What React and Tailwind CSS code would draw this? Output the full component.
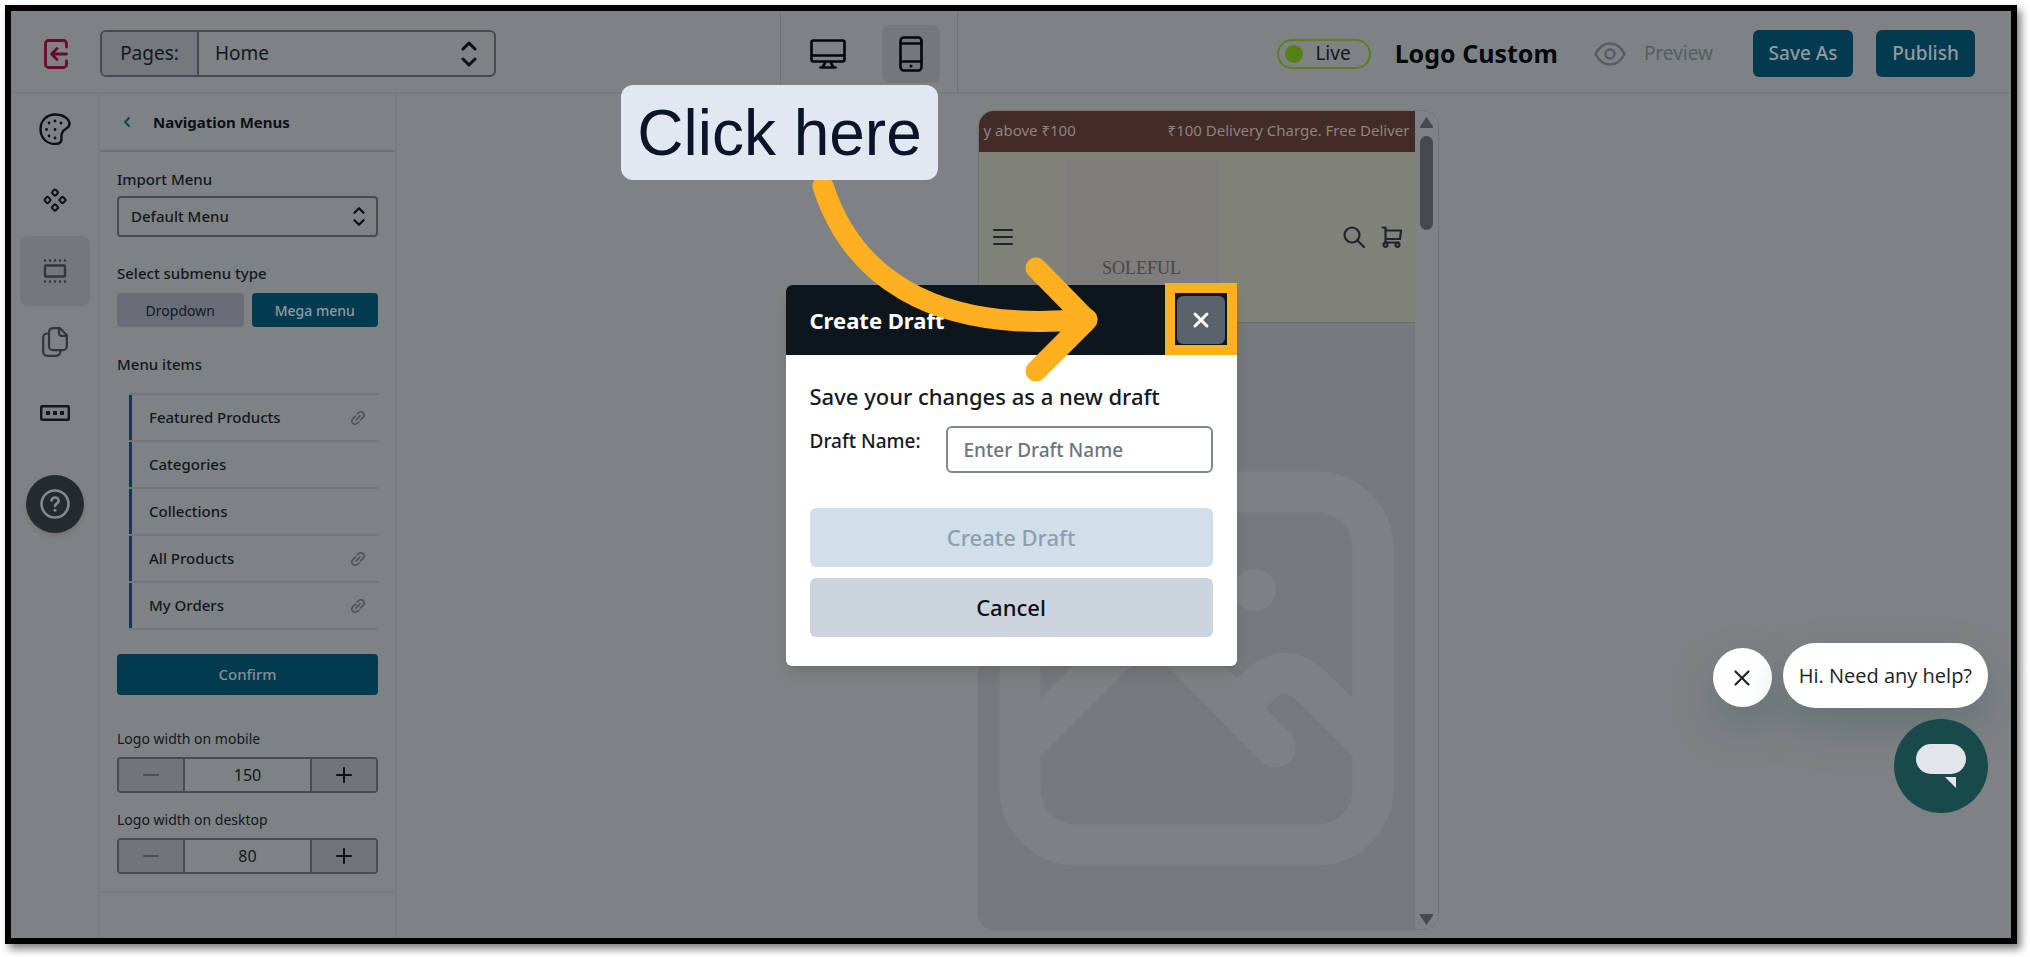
import React, { useState } from "react";
import { ChevronLeft, X } from "lucide-react";

function Icon({ className, viewBox = "0 0 24 24", sw = 2, children }) {
  return (
    <svg
      className={className}
      viewBox={viewBox}
      fill="none"
      stroke="currentColor"
      strokeWidth={sw}
      strokeLinecap="round"
      strokeLinejoin="round"
      aria-hidden="true"
    >
      {children}
    </svg>
  );
}

function UpDown({ className, sw = 3 }) {
  return (
    <Icon className={className} viewBox="0 0 16 28" sw={sw}>
      <path d="M2 9 L8 3 L14 9 M2 19 L8 25 L14 19" />
    </Icon>
  );
}

function PaletteIcon() {
  const dots = [
    [16, 8], [10, 10], [22, 10], [7.5, 16.5], [16, 16.5], [10, 23], [16, 25],
  ];
  return (
    <Icon className="size-8 text-[#0b1015]" viewBox="0 0 32 32" sw={2.4}>
      <path d="M16 1.500C7.500 1.500 1.500 8 1.500 16.200 1.500 24.500 7.500 31 16 31c4.500 0 6.800-2 6.500-5.500-.3-3-.3-5.500 2-7.800 2-2 6-3 6-6.700C30.500 5.500 24 1.500 16 1.500Z" />
      {dots.map(([x, y]) => (
        <circle key={`${x}-${y}`} cx={x} cy={y} r="1.4" fill="currentColor" stroke="none" />
      ))}
    </Icon>
  );
}

function DiamondsIcon() {
  return (
    <Icon className="size-6 text-[#12171c]" sw={2.2}>
      <rect x="9.500" y="2" width="5" height="5" rx="1.500" transform="rotate(45 12 4.500)" />
      <rect x="9.500" y="17" width="5" height="5" rx="1.500" transform="rotate(45 12 19.500)" />
      <rect x="2" y="9.500" width="5" height="5" rx="1.500" transform="rotate(45 4.500 12)" />
      <rect x="17" y="9.500" width="5" height="5" rx="1.500" transform="rotate(45 19.500 12)" />
    </Icon>
  );
}

function SectionIcon() {
  return (
    <Icon className="size-6 text-[#30363b]" sw={2.4}>
      <rect x="2" y="6.500" width="20" height="11" rx="1" />
      <path d="M2 1.500h.01M7 1.500h.01M12 1.500h.01M17 1.500h.01M22 1.500h.01M2 22.500h.01M7 22.500h.01M12 22.500h.01M17 22.500h.01M22 22.500h.01" />
    </Icon>
  );
}

function PagesIcon() {
  return (
    <Icon className="h-[30px] w-[26px] text-[#30363b]" viewBox="0 0 26 30" sw={2.2}>
      <path d="M11 1.200h7l6.800 7v11a4 4 0 0 1-4 4H11a4 4 0 0 1-4-4V5.200a4 4 0 0 1 4-4ZM17 2v4a3 3 0 0 0 3 3h4" />
      <path d="M7 6.500H5a4 4 0 0 0-3.800 4V25a4 4 0 0 0 4 3.800h9a4 4 0 0 0 4-3.800v-2" />
    </Icon>
  );
}

function FooterIcon() {
  return (
    <Icon className="h-4 w-[30px] text-[#12171c]" viewBox="0 0 30 16" sw={2.4}>
      <rect x="1.200" y="1.200" width="27.600" height="13.600" rx="1" />
      <path d="M6 6h4v4H6ZM13 6h4v4h-4ZM20 6h4v4h-4Z" fill="currentColor" stroke="none" />
    </Icon>
  );
}

function LinkIcon() {
  return (
    <Icon className="size-[14px] text-[#4d5256]" viewBox="0 0 14 14" sw={1.6}>
      <path d="M6 3 7.500 1.800a2.900 2.900 0 0 1 4.700 4.400c-.8 1.200-1.700 2-2.700 2.600" />
      <path d="M8 11 6.500 12.200a2.900 2.900 0 0 1-4.700-4.400c.8-1.200 1.700-2 2.700-2.600" />
      <path d="M5.200 9.200C5 7.200 8.800 6.800 8.800 4.800" />
    </Icon>
  );
}

function TopBar() {
  return (
    <header className="flex h-[83px] shrink-0 items-stretch border-b-2 border-[#787b7d]">
      <div className="flex min-w-0 flex-[769] items-center pt-1">
        <button aria-label="Exit editor" className="flex w-[89px] items-center justify-center text-[#6a0a2b]">
          <Icon className="h-[30px] w-[24px]" viewBox="0 0 24 30" sw={2.8}>
            <path d="M22.500 8V4.500a3 3 0 0 0-3-3h-15a3 3 0 0 0-3 3v21a3 3 0 0 0 3 3h15a3 3 0 0 0 3-3V22" />
            <path d="M22.500 15H8M13 9.500 7.500 15l5.500 5.500" />
          </Icon>
        </button>
        <div className="relative flex h-[47px] w-[396px] overflow-hidden rounded-md border-2 border-[#454b53] text-[19px] text-[#12181f]">
          <label htmlFor="page" className="flex w-[97px] items-center justify-center border-r-2 border-[#454b53] bg-[#75787d]">
            Pages:
          </label>
          <select id="page" className="flex-1 appearance-none bg-transparent px-4 outline-none">
            <option>Home</option>
          </select>
          <UpDown className="pointer-events-none absolute top-2 right-[17px] h-7 w-4 text-[#0b1015]" />
        </div>
      </div>
      <div className="flex w-[178px] items-center justify-between border-x border-[#717477] pt-1 pr-[17px] pl-[29px] text-[#05080b]">
        <button aria-label="Desktop preview">
          <Icon className="h-[30px] w-9" viewBox="0 0 36 30" sw={2.6}>
            <rect x="1.500" y="1.500" width="33" height="21" rx="2" />
            <path d="M2 16.500h32M15.500 23l-2.500 4.500M20.500 23l2.500 4.500M10.500 28.500h15" />
          </Icon>
        </button>
        <button aria-label="Mobile preview" className="flex size-[58px] items-center justify-center rounded-lg bg-[#75787a]">
          <Icon className="h-9 w-6" viewBox="0 0 24 36" sw={2.6}>
            <rect x="1.500" y="1.500" width="21" height="33" rx="3.500" />
            <path d="M2 7.500h20M2 25.500h20" />
            <circle cx="12" cy="30" r="1.500" fill="currentColor" stroke="none" />
          </Icon>
        </button>
      </div>
      <div className="flex min-w-0 flex-[1017] items-center justify-end pt-1 pr-9">
        <span className="flex h-[30px] items-center gap-3 rounded-full border-2 border-[#5c7f1d] pr-[18px] pl-[6px] text-[19px] text-[#12181f]">
          <span className="size-[18px] rounded-full bg-[#578014]" />
          Live
        </span>
        <h1 className="ml-6 text-[25px] font-bold text-[#05090d]">Logo Custom</h1>
        <button className="ml-9 flex items-center gap-[18px] text-[19px] text-[#555c64]">
          <Icon className="h-6 w-8" viewBox="0 0 32 24" sw={2.4}>
            <path d="M1.500 12C5 5 10 1.500 16 1.500S27 5 30.500 12C27 19 22 22.500 16 22.500S5 19 1.500 12Z" />
            <circle cx="16" cy="12" r="4.500" />
          </Icon>
          Preview
        </button>
        <button className="ml-10 h-[47px] w-[100px] rounded-md bg-[#023a50] text-[19px] font-medium text-[#909a9f]">Save As</button>
        <button className="ml-[23px] h-[47px] w-[99px] rounded-md bg-[#023a50] text-[19px] font-medium text-[#909a9f]">Publish</button>
      </div>
    </header>
  );
}

function Rail() {
  return (
    <nav className="flex w-[89px] shrink-0 flex-col items-center gap-px border-r-2 border-[#797c7e]">
      <button aria-label="Theme" className="flex size-[70px] items-center justify-center"><PaletteIcon /></button>
      <button aria-label="Widgets" className="flex size-[70px] items-center justify-center"><DiamondsIcon /></button>
      <button aria-label="Sections" className="flex size-[70px] items-center justify-center rounded-lg bg-[#75787a]"><SectionIcon /></button>
      <button aria-label="Pages" className="flex size-[70px] items-center justify-center"><PagesIcon /></button>
      <button aria-label="Footer" className="flex size-[70px] items-center justify-center"><FooterIcon /></button>
      <button aria-label="Help" className="mt-[26px] flex size-[58px] items-center justify-center rounded-full bg-[#232b2e] text-[#858a8c] shadow-md">
        <Icon className="size-[30px]" viewBox="0 0 30 30" sw={2.6}>
          <circle cx="15" cy="15" r="13.500" />
          <path d="M11.500 11.500c.4-2 1.800-3 3.600-3 2 0 3.600 1.300 3.600 3.200 0 2.600-3.600 2.700-3.600 5.300" />
          <circle cx="15" cy="21.300" r="1.500" fill="currentColor" stroke="none" />
        </Icon>
      </button>
    </nav>
  );
}

const menuItems = [
  { name: "Featured Products", linked: true },
  { name: "Categories", linked: false },
  { name: "Collections", linked: false },
  { name: "All Products", linked: true },
  { name: "My Orders", linked: true },
];

function Stepper({ id, label, initial }) {
  const [value, setValue] = useState(initial);
  return (
    <div>
      <label htmlFor={id} className="block text-[14px] leading-5">{label}</label>
      <div className="mt-2 flex h-9 overflow-hidden rounded border-2 border-[#464c50]">
        <button aria-label={`Decrease ${label}`} onClick={() => setValue(value - 1)} className="flex w-16 items-center justify-center bg-[#727577] text-[#4a4f53]">
          <Icon className="size-4" viewBox="0 0 16 16"><path d="M1 8h14" /></Icon>
        </button>
        <input id={id} value={value} onChange={(e) => setValue(Number(e.target.value) || 0)} className="min-w-0 flex-1 border-x-2 border-[#464c50] bg-transparent text-center text-[16px] outline-none" />
        <button aria-label={`Increase ${label}`} onClick={() => setValue(value + 1)} className="flex w-16 items-center justify-center bg-[#727577] text-[#0d1217]">
          <Icon className="size-4" viewBox="0 0 16 16"><path d="M1 8h14M8 1v14" /></Icon>
        </button>
      </div>
    </div>
  );
}

function MenuPanel() {
  return (
    <aside className="w-[297px] shrink-0 border-r-2 border-[#797c7e] text-[#12181f]">
      <div className="flex h-[58px] items-center border-b-2 border-[#6a7074] pl-[19px]">
        <button aria-label="Back" className="text-[#05465e]"><ChevronLeft className="size-4" strokeWidth={3} /></button>
        <h2 className="ml-[18px] text-[15px] font-bold text-[#0b1015]">Navigation Menus</h2>
      </div>
      <div className="border-b-2 border-[#787b7d] px-[17px] py-[17px]">
        <label htmlFor="import-menu" className="block text-[15px] leading-5 font-medium">Import Menu</label>
        <div className="relative mt-[7px] h-[41px] rounded border-2 border-[#454b53]">
          <select id="import-menu" className="size-full appearance-none bg-transparent px-3 text-[15px] font-medium outline-none">
            <option>Default Menu</option>
          </select>
          <UpDown className="pointer-events-none absolute top-2 right-[11px] h-[21px] w-3 text-[#0b1015]" />
        </div>
        <p className="mt-[26px] text-[15px] leading-5 font-medium">Select submenu type</p>
        <div className="mt-[10px] flex gap-2 text-[14px]">
          <button className="h-[34px] flex-1 rounded bg-[#686d77]">Dropdown</button>
          <button className="h-[34px] flex-1 rounded bg-[#023a50] font-medium text-[#909a9f]">Mega menu</button>
        </div>
        <p className="mt-[27px] text-[15px] leading-5 font-medium">Menu items</p>
        <ul className="mt-[19px] ml-3 border-t-2 border-[#74777a] text-[15px] font-medium">
          {menuItems.map((item) => (
            <li key={item.name} className="border-b-2 border-[#74777a]">
              <a href="#" className="flex h-[45px] items-center justify-between border-l-[3px] border-[#023e55] pr-[13px] pl-[17px]">
                {item.name}
                {item.linked && <LinkIcon />}
              </a>
            </li>
          ))}
        </ul>
        <button className="mt-6 h-[41px] w-full rounded bg-[#023a50] text-[15px] font-medium text-[#868f94]">Confirm</button>
        <div className="mt-[34px] flex flex-col gap-[17px]">
          <Stepper id="mobile-width" label="Logo width on mobile" initial={150} />
          <Stepper id="desktop-width" label="Logo width on desktop" initial={80} />
        </div>
      </div>
    </aside>
  );
}

function PhonePreview() {
  return (
    <div className="flex min-w-0 flex-1 items-stretch justify-center pt-4 pb-2 pl-2">
      <section className="flex w-[461px] overflow-hidden rounded-2xl border border-[#717577]">
        <div className="flex min-w-0 flex-1 flex-col">
          <div className="flex h-[41px] shrink-0 items-center justify-between bg-[#432b27] px-[5px] pb-[2px] text-[15px] whitespace-nowrap text-[#8f8381]">
            <span>y above ₹100</span>
            <span>₹100 Delivery Charge. Free Deliver</span>
          </div>
          <div className="flex h-[171px] shrink-0 items-center border-b border-[#666b6b] bg-[#80827a] pr-3 pl-[14px] text-[#1f252b]">
            <button aria-label="Open menu">
              <Icon className="h-4 w-5" viewBox="0 0 20 16"><path d="M1 1h18M1 8h18M1 15h18" /></Icon>
            </button>
            <div className="ml-[52px] flex h-[154px] w-[154px] flex-col items-center justify-end bg-[#7f7d7c] pb-[38px]">
              <span className="font-['Liberation_Serif',serif] text-[18px] leading-4 text-[#474645]">SOLEFUL</span>
            </div>
            <div className="ml-auto flex items-center gap-4">
              <button aria-label="Search">
                <Icon className="size-[22px]" viewBox="0 0 22 22" sw={2.2}><circle cx="9" cy="9" r="7.500" /><path d="m15 15 6 6" /></Icon>
              </button>
              <button aria-label="Cart">
                <Icon className="size-[22px]" viewBox="0 0 22 22" sw={2.2}>
                  <path d="M1.500 1.500H4.500V16.500M4.500 4.500H20l-1 8.500H4.500M4.500 16.500h13" />
                  <circle cx="4.500" cy="18.800" r="2" /><circle cx="16.500" cy="18.800" r="2" />
                </Icon>
              </button>
            </div>
          </div>
          <div className="flex flex-1 items-center justify-center bg-[#74797b] pt-[86px] text-[#7e8183]">
            <svg className="size-[396px] shrink-0" viewBox="0 0 396 396" fill="none" stroke="currentColor" strokeWidth="41" strokeLinecap="round" strokeLinejoin="round" aria-hidden="true">
              <rect x="21" y="21" width="353" height="353" rx="56" />
              <path d="M30 268 L124 174 Q150 148 176 174 L276 276 M242 232 L262 213 Q286 192 310 213 L366 268" />
              <circle cx="256" cy="119" r="21" fill="currentColor" stroke="none" />
            </svg>
          </div>
        </div>
        <div className="flex w-[23px] shrink-0 flex-col items-center pt-[6px] pb-1 text-[#464a4c]">
          <svg className="h-[11px] w-[13px]" viewBox="0 0 13 11" fill="currentColor" aria-hidden="true"><path d="M6.500 0 13 9.500V11H0V9.500Z" /></svg>
          <div className="mt-2 h-[94px] w-[13px] rounded-full bg-current" />
          <svg className="mt-auto h-[11px] w-[13px]" viewBox="0 0 13 11" fill="currentColor" aria-hidden="true"><path d="M6.500 11 0 1.500V0h13v1.500Z" /></svg>
        </div>
      </section>
    </div>
  );
}

function DraftDialog() {
  return (
    <div role="dialog" aria-labelledby="draft-title" className="w-[451px] overflow-hidden rounded-md bg-white font-medium text-[#16191f] shadow-lg">
      <div className="flex h-[70px] items-center justify-between bg-[#0d161d] pr-3 pl-6">
        <h2 id="draft-title" className="text-[22px] font-bold text-white">Create Draft</h2>
        <button aria-label="Close" className="flex size-12 items-center justify-center rounded-md bg-[#5a626b] text-white">
          <X className="size-6" strokeWidth={3} />
        </button>
      </div>
      <form className="px-6 pt-[25px] pb-[29px]" onSubmit={(e) => e.preventDefault()}>
        <p className="text-[22px] leading-8">Save your changes as a new draft</p>
        <div className="mt-[14px] flex justify-between">
          <label htmlFor="draft-name" className="text-[19px] leading-[30px]">Draft Name:</label>
          <input id="draft-name" placeholder="Enter Draft Name" className="h-[47px] w-[267px] rounded-md border-2 border-[#7d8893] px-4 text-[19px] placeholder-[#6b757f] outline-none" />
        </div>
        <button type="submit" className="mt-[35px] h-[59px] w-full rounded-md bg-[#d1dfea] text-[22px] text-[#8c9fb0]">Create Draft</button>
        <button type="button" className="mt-[11px] h-[59px] w-full rounded-md bg-[#ccd4de] text-[22px] text-[#0b1015]">Cancel</button>
      </form>
    </div>
  );
}

function Guide() {
  return (
    <>
      <div className="absolute top-[272px] left-[1154px] size-[72px] border-[10px] border-[#ffb020]" />
      <svg className="pointer-events-none absolute top-0 left-0 h-[400px] w-[1200px]" viewBox="11 11 1200 400" fill="none" stroke="#ffb020" strokeWidth="21" strokeLinecap="round" strokeLinejoin="round" aria-hidden="true">
        <path d="M823 186C850 270 925 335 1087 319" />
        <path d="M1036 268 1087 320 1036 371" />
      </svg>
      <div className="absolute top-[74px] left-[610px] flex h-[95px] w-[317px] items-center justify-center rounded-xl bg-[#e1e8f1] font-['Liberation_Sans',sans-serif] text-[64px] text-[#0b1428]">
        Click here
      </div>
    </>
  );
}

function ChatWidget() {
  return (
    <div className="absolute right-[23px] bottom-[125px] flex flex-col items-end gap-[11px]">
      <div className="flex items-center gap-[11px]">
        <button aria-label="Dismiss" className="mt-1 flex size-[59px] items-center justify-center rounded-full bg-white text-[#222] shadow-[0_20px_40px_rgba(60,95,95,0.4)]">
          <X className="size-[26px]" strokeWidth={2} />
        </button>
        <button className="h-[65px] rounded-full bg-white px-4 font-['Open_Sans',sans-serif] text-[20px] whitespace-nowrap text-[#1d1d25] shadow-[0_20px_40px_rgba(60,95,95,0.4)]">
          Hi. Need any help?
        </button>
      </div>
      <button aria-label="Open chat" className="flex size-[94px] items-center justify-center rounded-full bg-[#184a4c]">
        <svg className="h-11 w-[50px]" viewBox="0 0 50 44" fill="#e2e6ec" aria-hidden="true">
          <rect width="50" height="30" rx="15" />
          <path d="M29 33h11v11Z" />
        </svg>
      </button>
    </div>
  );
}

export default function App() {
  return (
    <div className="min-h-screen bg-white pt-[5px] pr-[13px] pb-[13px] pl-[5px] font-['Noto_Sans',sans-serif]">
      <div className="relative flex min-h-[939px] flex-col border-[6px] border-black bg-[#7f8284] shadow-[4px_5px_8px_rgba(0,0,0,0.5)]">
        <TopBar />
        <main className="flex flex-1 items-stretch">
          <Rail />
          <MenuPanel />
          <PhonePreview />
        </main>
        <div className="absolute inset-0 flex items-center justify-center pt-[2px]">
          <DraftDialog />
        </div>
        <Guide />
        <ChatWidget />
      </div>
    </div>
  );
}
